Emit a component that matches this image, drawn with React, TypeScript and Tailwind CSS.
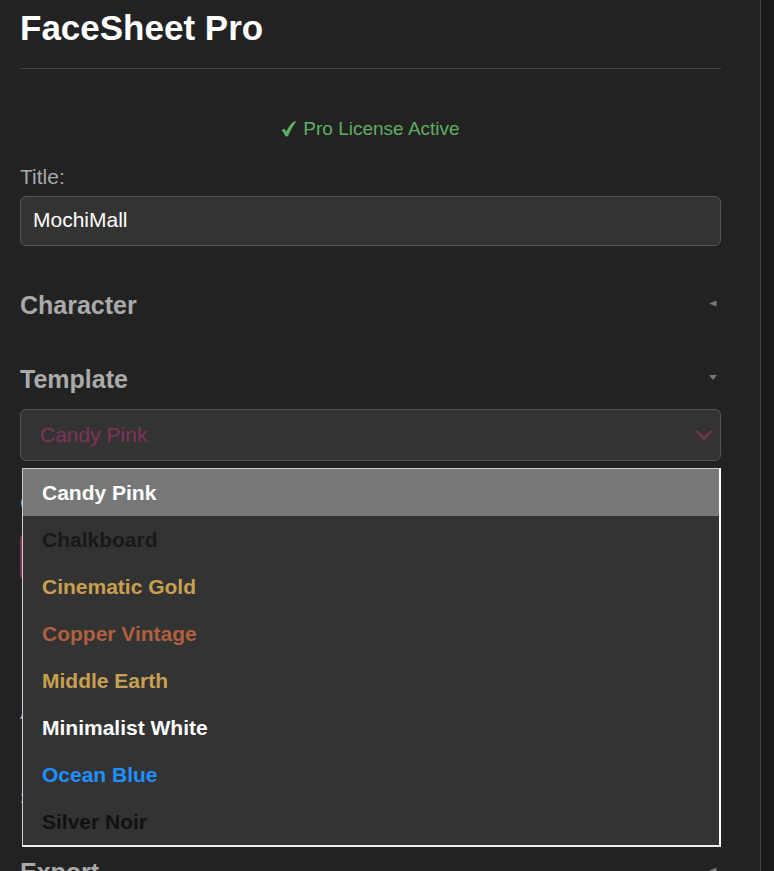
import { ChevronDown } from "lucide-react";

const templates = [
  { name: "Candy Pink", color: "text-white" },
  { name: "Chalkboard", color: "text-[#181818]" },
  { name: "Cinematic Gold", color: "text-[#c9a050]" },
  { name: "Copper Vintage", color: "text-[#b06040]" },
  { name: "Middle Earth", color: "text-[#c9a050]" },
  { name: "Minimalist White", color: "text-white" },
  { name: "Ocean Blue", color: "text-[#1e90ff]" },
  { name: "Silver Noir", color: "text-[#111111]" },
];

function Arrow({ open }: { open: boolean }) {
  return (
    <svg viewBox="0 0 8 8" className="size-2 overflow-visible fill-[#777777]" aria-hidden="true">
      <path d={open ? "M0 0h8L4 5z" : "M7.500 -.5v6L0 2.500z"} />
    </svg>
  );
}

function SectionHeader({ title, open = false }: { title: string; open?: boolean }) {
  return (
    <h2>
      <button
        type="button"
        aria-expanded={open}
        className="flex h-8 w-full items-center justify-between pr-1 text-[25px] font-bold text-[#aaaaaa]"
      >
        {title}
        <Arrow open={open} />
      </button>
    </h2>
  );
}

function TemplatePicker() {
  return (
    <div className="relative mt-3.5">
      <select
        aria-label="Template"
        defaultValue="Candy Pink"
        className="block h-[52px] w-full appearance-none rounded-md border border-[#555555] bg-[#333333] px-[19px] text-[#80335a]"
      >
        {templates.map((t) => (
          <option key={t.name}>{t.name}</option>
        ))}
      </select>
      <ChevronDown
        className="pointer-events-none absolute top-3 right-[3px] size-7 text-[#8a2f5c]"
        strokeWidth={1.7}
        aria-hidden="true"
      />
      <ul
        role="listbox"
        aria-label="Templates"
        className="absolute top-full right-0 left-0.5 z-10 mt-[7px] border border-r-2 border-b-2 border-[#cccccc] border-r-white border-b-[#eeeeee] bg-[#333333] font-bold"
      >
        {templates.map((t, i) => (
          <li
            key={t.name}
            role="option"
            aria-selected={i === 0}
            className={`flex h-[47px] items-center px-[19px] ${t.color} ${i === 0 ? "bg-[#777777]" : ""}`}
          >
            {t.name}
          </li>
        ))}
      </ul>
    </div>
  );
}

export default function App() {
  return (
    <div className="h-screen overflow-hidden bg-[#1a1a1a] pr-[13px] font-['Liberation_Sans',Arial,sans-serif] text-[21px] leading-6">
      <main className="h-full overflow-hidden border-r border-[#444444] bg-[#222222] pr-[39px] pl-5">
        <h1 className="border-b border-[#444444] pt-2 pb-5 text-[35px] leading-10 font-bold text-white">
          FaceSheet Pro
        </h1>
        <p className="mt-12 flex items-center justify-center gap-1.5 text-[19px] text-[#5fae62]">
          <svg viewBox="0 0 16 16" className="size-4 fill-current" aria-hidden="true">
            <path d="M.5 9.300 3.200 7.600l2.100 3C7.300 6.200 9.800 2.800 12.800 .4L15.400 .3C12 4.400 9.600 9 7 15.300L4.400 15.600C3.400 13 2.300 11 .5 9.300z" />
          </svg>
          Pro License Active
        </p>
        <label htmlFor="title" className="mt-6 block text-[#aaaaaa]">
          Title:
        </label>
        <input
          id="title"
          type="text"
          defaultValue="MochiMall"
          className="mt-[7px] block h-[50px] w-full rounded-md border border-[#555555] bg-[#333333] px-3 pb-0.5 text-white"
        />
        <div className="mt-[43px]">
          <SectionHeader title="Character" />
        </div>
        <div className="mt-[42px]">
          <SectionHeader title="Template" open />
          <TemplatePicker />
        </div>
        <label htmlFor="color" className="mt-[30px] block text-[#aaaaaa]">
          Color:
        </label>
        <button
          id="color"
          type="button"
          aria-label="Color"
          className="mt-[18px] block h-12 w-full rounded-md bg-[#80335a]"
        />
        <div className="mt-[119px] text-[#aaaaaa]">Accent:</div>
        <div className="mt-[62px] text-[#aaaaaa]">Size:</div>
        <div className="mt-[46px]">
          <SectionHeader title="Export" />
        </div>
      </main>
    </div>
  );
}
